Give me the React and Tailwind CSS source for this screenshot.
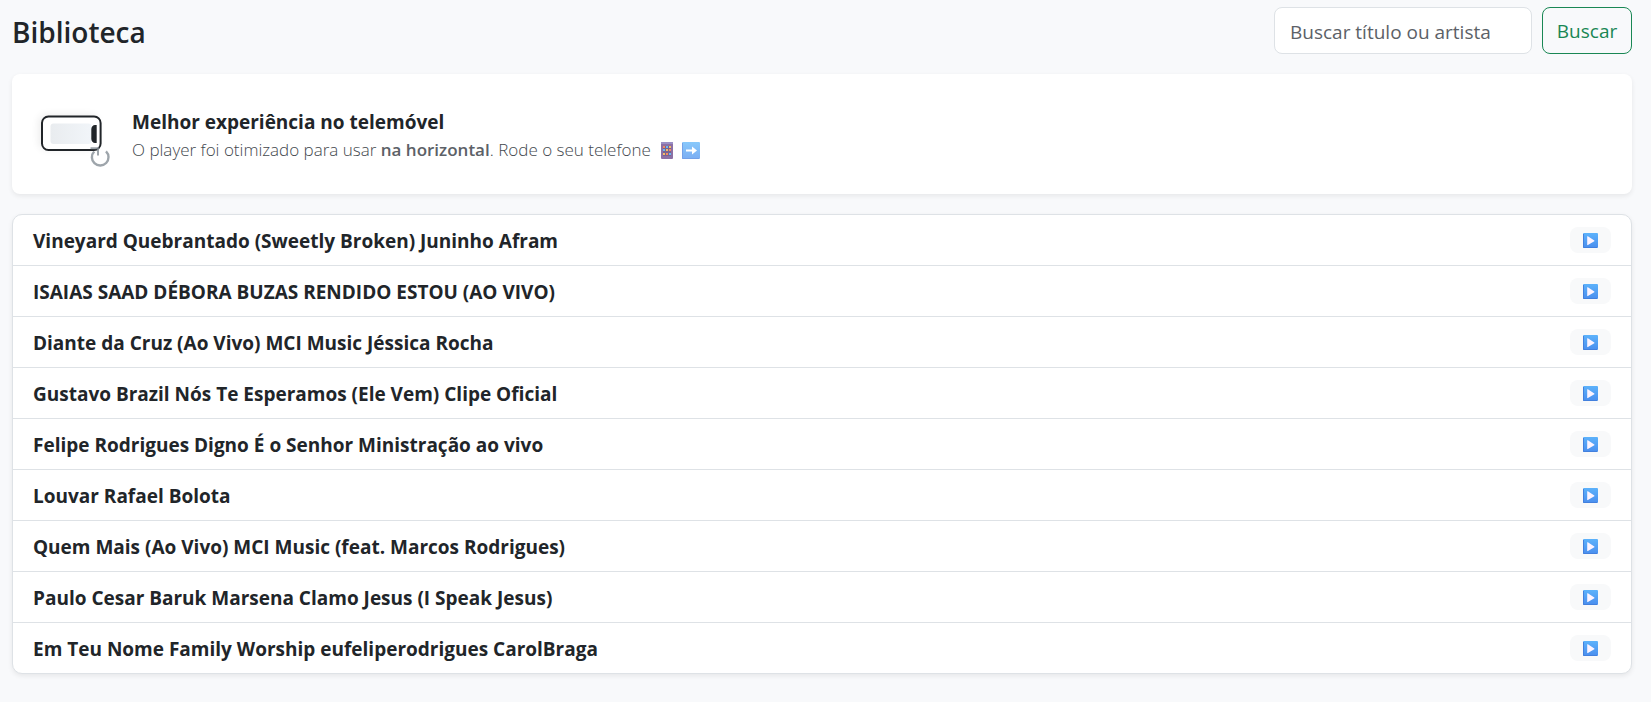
import React from "react";

const songs = [
  "Vineyard Quebrantado (Sweetly Broken) Juninho Afram",
  "ISAIAS SAAD DÉBORA BUZAS RENDIDO ESTOU (AO VIVO)",
  "Diante da Cruz (Ao Vivo) MCI Music Jéssica Rocha",
  "Gustavo Brazil Nós Te Esperamos (Ele Vem) Clipe Oficial",
  "Felipe Rodrigues Digno É o Senhor Ministração ao vivo",
  "Louvar Rafael Bolota",
  "Quem Mais (Ao Vivo) MCI Music (feat. Marcos Rodrigues)",
  "Paulo Cesar Baruk Marsena Clamo Jesus (I Speak Jesus)",
  "Em Teu Nome Family Worship eufeliperodrigues CarolBraga",
];

function PlayIcon() {
  return (
    <svg width="15" height="15" viewBox="0 0 15 15" aria-hidden="true">
      <defs>
        <linearGradient id="playFill" x1="0" y1="0" x2="0" y2="1">
          <stop offset="0" stopColor="#5cb2fb" />
          <stop offset="1" stopColor="#4a8eee" />
        </linearGradient>
      </defs>
      <rect width="15" height="15" rx="1" fill="url(#playFill)" />
      <path d="M0.5 1V14.5H14" fill="none" stroke="#4380dd" />
      <path d="M4.2 3.6v8.2c0 .4.4.5.7.3l6.4-3.9c.3-.2.3-.6 0-.8L4.9 3.3c-.3-.2-.7-.1-.7.3z" fill="#fdf4ff" />
    </svg>
  );
}

function PhoneIcon() {
  return (
    <svg className="shrink-0" width="80" height="70" viewBox="0 -3 80 70" aria-hidden="true">
      <defs>
        <linearGradient id="screenFill" x1="0" y1="0" x2="1" y2="0">
          <stop offset="0" stopColor="#e9ecef" />
          <stop offset="1" stopColor="#f1f5f9" />
        </linearGradient>
        <filter id="softShadow" x="-30%" y="-40%" width="160%" height="180%">
          <feGaussianBlur stdDeviation="4" />
        </filter>
      </defs>
      <rect x="7" y="13" width="58" height="34" rx="6" fill="#000" opacity="0.08" filter="url(#softShadow)" />
      <rect x="10" y="14.5" width="58.6" height="33.5" rx="6.5" fill="#fff" stroke="#212529" strokeWidth="2" />
      <rect x="18.5" y="21.5" width="41" height="20.5" rx="3" fill="url(#screenFill)" />
      <path d="M64.7 23v18h-1.7c-2 0-3.7-2-3.7-4v-10c0-2 1.700-4 3.700-4z" fill="#212529" />
      <g fill="none" stroke="#868e96" strokeOpacity="0.8" strokeWidth="2.4">
        <path d="M74 49.3a8.300 8.300 0 1 1-11.800.2" />
        <path d="M58.500 46.200H66v7.300" strokeWidth="2" />
      </g>
    </svg>
  );
}

function MobileIcon() {
  return (
    <svg width="12" height="17" viewBox="0 0 12 17" aria-hidden="true">
      <rect width="12" height="17" rx="1" fill="#8c70a5" />
      <rect width="12" height="2" fill="#9b8fc4" />
      <rect x="2" y="4" width="8" height="10" fill="#7a6390" />
      <path d="M2 4h2v2H2zM8 7h2v2H8zM5 11h2v2H5z" fill="#f58a62" />
      <path d="M5 4h2v2H5zM2 7h2v2H2zM8 11h2v2H8z" fill="#69b9f2" />
      <path d="M8 4h2v2H8zM5 7h2v2H5zM2 11h2v2H2z" fill="#f3bd68" />
    </svg>
  );
}

function ArrowIcon() {
  return (
    <svg width="18" height="17" viewBox="0 0 18 17" aria-hidden="true">
      <defs>
        <linearGradient id="arrowFill" x1="0" y1="0" x2="0" y2="1">
          <stop offset="0" stopColor="#87c8fb" />
          <stop offset="1" stopColor="#7baef3" />
        </linearGradient>
      </defs>
      <rect width="18" height="17" rx="1" fill="url(#arrowFill)" />
      <path d="M0.5 1V16.5H17" fill="none" stroke="#73a1e8" />
      <path d="M4 7.500h6V4.500l5 4-5 4V9.500H4z" fill="#fff" />
    </svg>
  );
}

export default function App() {
  return (
    <div className="min-h-screen bg-[#f8f9fb] pt-[7px] pr-[19px] pb-7 pl-3 font-['Open_Sans','Noto_Sans',sans-serif] text-[#212529]">
      <header className="mb-5 flex items-center justify-between">
        <h1 className="pt-0.5 text-[28px] leading-[34px] font-semibold">Biblioteca</h1>
        <form className="flex gap-2.5" onSubmit={(e) => e.preventDefault()}>
          <input
            type="search"
            aria-label="Buscar título ou artista"
            placeholder="Buscar título ou artista"
            className="h-[47px] w-[258px] rounded-lg border border-[#dee2e6] bg-white px-[15px] pt-0.5 text-[19px] placeholder:text-[#5c6167]"
          />
          <button type="submit" className="h-[47px] w-[90px] rounded-lg border border-[#198754] pt-0.5 text-[19px] text-[#198754]">
            Buscar
          </button>
        </form>
      </header>

      <main className="flex flex-col gap-5">
        <section className="flex h-[120px] items-center gap-5 rounded-lg bg-white px-5 shadow-[0_2px_5px_rgba(0,0,0,0.075)]">
          <PhoneIcon />
          <div className="pt-1">
            <h2 className="text-[19px] leading-7 font-bold">Melhor experiência no telemóvel</h2>
            <p className="flex items-center text-[17px] leading-7 font-light text-[#43484e]">
              <span>
                O player foi otimizado para usar <strong className="font-semibold text-[#5c6167]">na horizontal</strong>. Rode o seu telefone
              </span>
              <span className="ml-2.5 flex gap-[9px]">
                <MobileIcon />
                <ArrowIcon />
              </span>
            </p>
          </div>
        </section>

        <ul className="overflow-hidden rounded-[10px] border border-[#dee2e6] bg-white shadow-[0_2px_5px_rgba(0,0,0,0.075)]">
          {songs.map((title) => (
            <li key={title} className="flex h-[51px] items-center justify-between border-b border-[#dee2e6] px-5 last:h-[50px] last:border-b-0">
              <span className="pt-0.5 text-[19px] leading-7 font-bold">{title}</span>
              <button
                type="button"
                aria-label={`Reproduzir ${title}`}
                className="flex h-[26px] w-[41px] items-center justify-center rounded-lg bg-[#f8f9fa]"
              >
                <PlayIcon />
              </button>
            </li>
          ))}
        </ul>
      </main>
    </div>
  );
}
